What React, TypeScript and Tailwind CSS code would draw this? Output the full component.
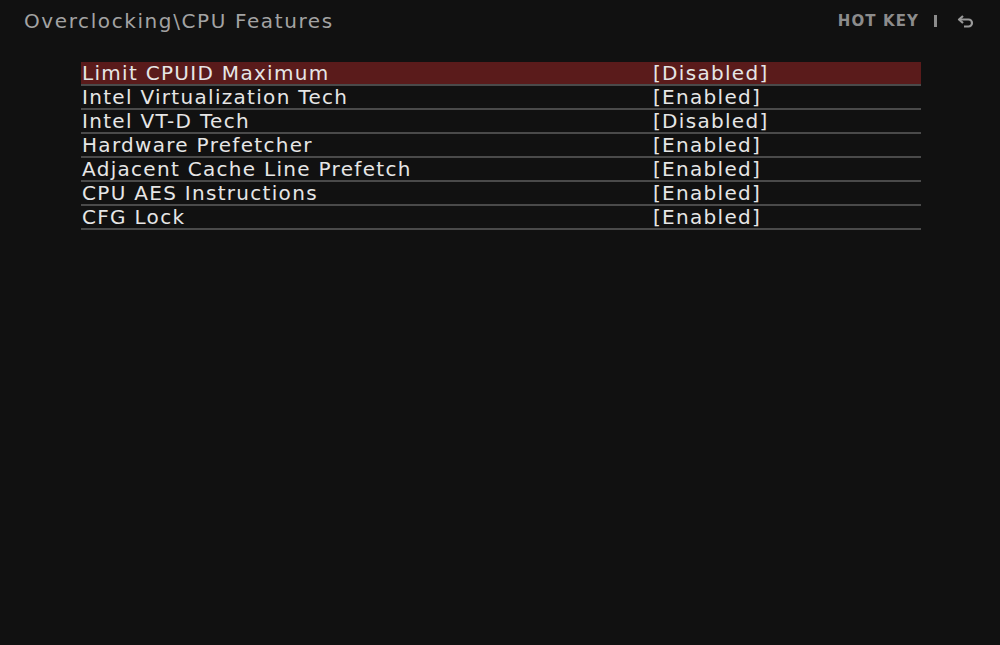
import { Fragment } from "react";

const rows = [
  { name: "Limit CPUID Maximum", value: "[Disabled]" },
  { name: "Intel Virtualization Tech", value: "[Enabled]" },
  { name: "Intel VT-D Tech", value: "[Disabled]" },
  { name: "Hardware Prefetcher", value: "[Enabled]" },
  { name: "Adjacent Cache Line Prefetch", value: "[Enabled]" },
  { name: "CPU AES Instructions", value: "[Enabled]" },
  { name: "CFG Lock", value: "[Enabled]" },
];

export default function App() {
  return (
    <div className="w-[1000px] h-[645px] bg-[#111111] font-['DejaVu_Sans',sans-serif] overflow-hidden">
      <div className="flex items-center justify-between h-[42px] pl-[24px] pr-[26px]">
        <div className="text-[20px] text-[#a3a3a3] tracking-[1.6px]">Overclocking\CPU Features</div>
        <div className="flex items-center text-[#8c8c8c]">
          <span className="text-[15px] font-bold tracking-[1.1px]">HOT KEY</span>
          <span className="ml-[15px] w-[3px] h-[12px] bg-[#8c8c8c]" />
          <svg className="ml-[20px]" width="17" height="14" viewBox="0 0 17 14" fill="none">
            <path d="M6 2 L2 5.5 L6 9" stroke="#9a9a9a" strokeWidth="2.2" strokeLinejoin="round" />
            <path d="M2.5 5.5 H11.5 A3.5 3.5 0 0 1 11.5 12.5 H7" stroke="#9a9a9a" strokeWidth="2.2" />
          </svg>
        </div>
      </div>

      <div className="ml-[81px] mt-[20px] w-[840px] flex flex-col">
        {rows.map((r, i) => (
          <Fragment key={r.name}>
            <div
              className={`flex items-center h-[22px] text-[20px] text-[#e6e6e6] tracking-[1.3px] ${
                i === 0 ? "bg-[#5a1b1b]" : ""
              }`}
            >
              <span className="pl-[1px] w-[572px]">{r.name}</span>
              <span>{r.value}</span>
            </div>
            <div className="h-[2px] bg-[#4a4a4a]" />
          </Fragment>
        ))}
      </div>
    </div>
  );
}
